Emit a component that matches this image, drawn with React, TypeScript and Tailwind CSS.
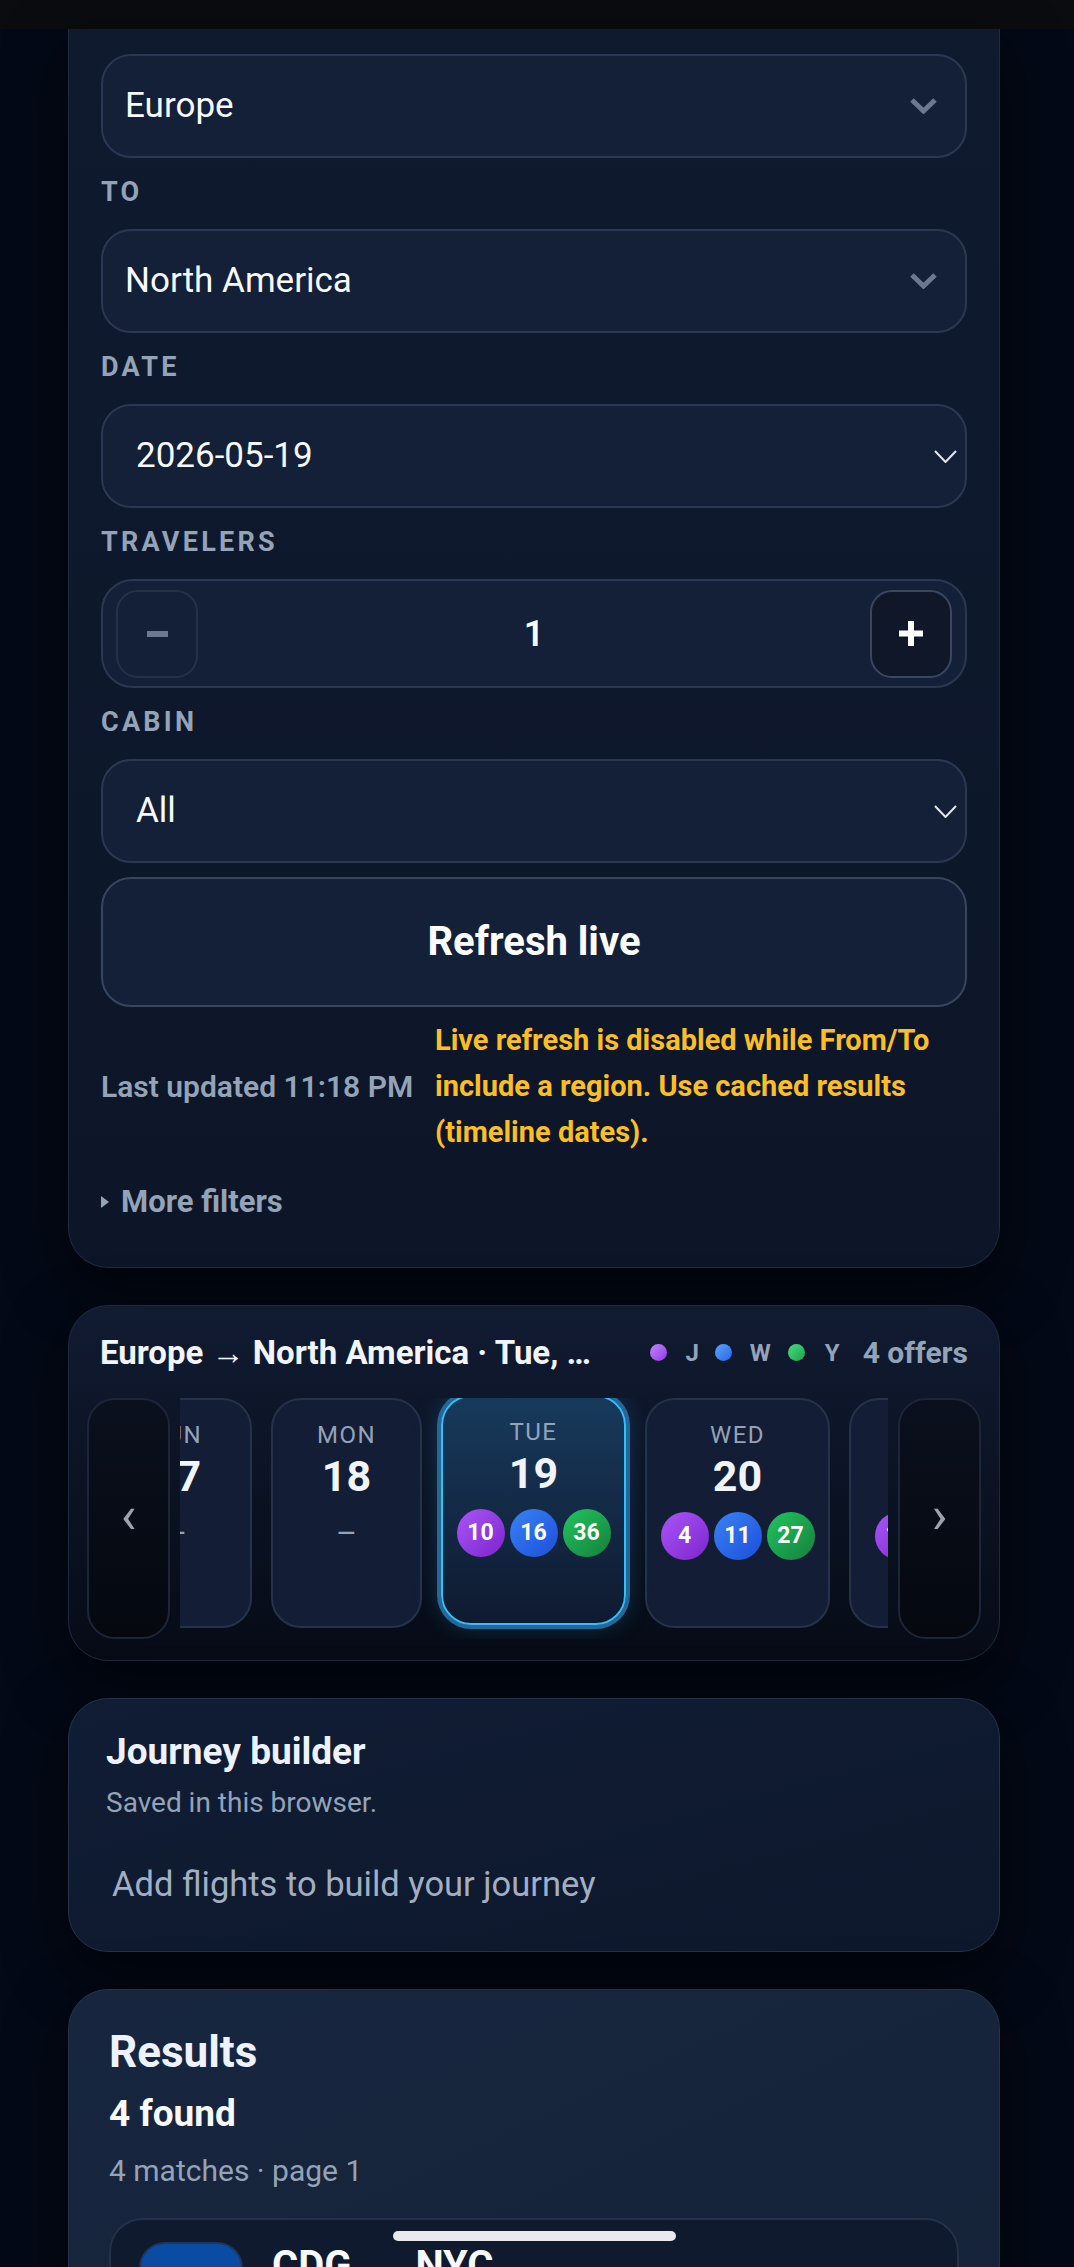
import React from 'react';

type Day = { dow: string; day: string; counts?: [number, number, number]; selected?: boolean; wide?: boolean };

const days: Day[] = [
  { dow: 'SUN', day: '17' },
  { dow: 'MON', day: '18' },
  { dow: 'TUE', day: '19', counts: [10, 16, 36], selected: true },
  { dow: 'WED', day: '20', counts: [4, 11, 27] },
  { dow: 'THU', day: '21', counts: [12, 18, 33], wide: true },
];

const badgeColors = [
  'bg-linear-to-br from-[#a855f7] to-[#7e22ce]',
  'bg-linear-to-br from-[#3b82f6] to-[#1d4ed8]',
  'bg-linear-to-br from-[#22c55e] to-[#15803d]',
];

function BoldChevron() {
  return (
    <svg width="27" height="16" viewBox="0 0 27 16">
      <path d="M2 2 L13.5 13 L25 2" fill="none" stroke="#6b7891" strokeWidth="5" />
    </svg>
  );
}

function ThinChevron() {
  return (
    <svg width="23" height="13" viewBox="0 0 23 13">
      <path d="M1 1 L11.5 12 L22 1" fill="none" stroke="#e5e7eb" strokeWidth="2" />
    </svg>
  );
}

function Label({ children }: { children: React.ReactNode }) {
  return (
    <div className="mt-[21px] mb-[24px] text-[27px] leading-[26px] font-bold tracking-[0.12em] text-[#94a3b8]">
      {children}
    </div>
  );
}

function SelectBox({ value, native }: { value: string; native?: boolean }) {
  return (
    <div
      className={`h-[104px] rounded-[30px] border-2 border-[#2b3852] bg-[#141f38] flex items-center justify-between text-[35px] text-[#f8fafc] ${
        native ? 'pl-[33px] pr-[8px]' : 'pl-[22px] pr-[28px]'
      }`}
    >
      <span>{value}</span>
      {native ? <ThinChevron /> : <BoldChevron />}
    </div>
  );
}

function DayCell({ d }: { d: Day }) {
  const width = d.wide ? 'w-[205px]' : d.counts ? 'w-[185px]' : 'w-[151px]';
  const look = d.selected
    ? 'border-[#38bdf8] bg-linear-to-b from-[#173a5c] to-[#0f1a31] -translate-y-[3px] shadow-[0_0_0_4px_#22699a,0_0_26px_rgba(56,189,248,0.25)]'
    : 'border-[#25324a] bg-[#131e36]';
  return (
    <div className={`shrink-0 h-[230px] ${width} rounded-[30px] border-2 ${look} flex flex-col items-center pt-[23px]`}>
      <div className="text-[24px] leading-[24px] tracking-[0.06em] text-[#94a3b8]">{d.dow}</div>
      <div className="mt-[8px] text-[43px] leading-[42px] font-bold text-[#f1f5f9]">{d.day}</div>
      {d.counts ? (
        <div className="mt-[15px] flex gap-[5px]">
          {d.counts.map((c, i) => (
            <div
              key={i}
              className={`w-[48px] h-[48px] rounded-full ${badgeColors[i]} flex items-center justify-center text-[23px] font-bold text-white`}
            >
              {c}
            </div>
          ))}
        </div>
      ) : (
        <div className="mt-[12px] h-[48px] text-[32px] leading-[48px] text-[#94a3b8]">–</div>
      )}
    </div>
  );
}

function ArrowButton({ glyph, side }: { glyph: string; side: 'left' | 'right' }) {
  return (
    <div
      className={`absolute top-0 ${side === 'left' ? 'left-0' : 'right-0'} w-[83px] h-[241px] rounded-[28px] border-2 border-[#1c2638] bg-linear-to-b from-[#0a101d] to-[#05080f] flex items-center justify-center pb-[6px] text-[52px] leading-[52px] text-[#9ca3af]`}
    >
      {glyph}
    </div>
  );
}

export default function App() {
  return (
    <div className="relative h-[2267px] overflow-hidden bg-[#030916] [font-family:Roboto,'Noto_Sans',sans-serif]">
      <div className="h-[29px] bg-[#0b0c0f]" />

      <div className="ml-[68px] mr-[74px]">
        {/* search card, top part scrolled out of view */}
        <div className="rounded-b-[40px] border border-t-0 border-[#1f2b40] bg-linear-to-b from-[#0f1a2f] to-[#0d1628] px-[32px] pt-[25px] pb-[50px] shadow-[0_20px_60px_rgba(0,0,0,0.6)]">
          <SelectBox value="Europe" />
          <Label>TO</Label>
          <SelectBox value="North America" />
          <Label>DATE</Label>
          <SelectBox value="2026-05-19" native />
          <Label>TRAVELERS</Label>
          <div className="h-[109px] rounded-[32px] border-2 border-[#2b3852] bg-[#141f38] flex items-center justify-between px-[13px]">
            <div className="w-[82px] h-[88px] rounded-[22px] border-2 border-[#253049] flex items-center justify-center">
              <div className="w-[21px] h-[6px] bg-[#6b7891]" />
            </div>
            <div className="text-[36px] font-semibold text-[#f8fafc]">1</div>
            <div className="w-[82px] h-[88px] rounded-[22px] border-2 border-[#3b4760] bg-[#0f1729] flex items-center justify-center">
              <svg width="24" height="25" viewBox="0 0 24 25">
                <rect x="9" y="0" width="6" height="25" fill="#fff" />
                <rect x="0" y="9.5" width="24" height="6" fill="#fff" />
              </svg>
            </div>
          </div>
          <Label>CABIN</Label>
          <SelectBox value="All" native />

          <button className="mt-[14px] w-full h-[130px] rounded-[30px] border-2 border-[#38455e] bg-[#141f38] text-[40px] font-bold text-white">
            Refresh live
          </button>

          <div className="mt-[10px] flex items-center justify-between">
            <span className="text-[30px] font-semibold text-[#94a3b8]">Last updated 11:18 PM</span>
            <p className="w-[532px] text-[29px] leading-[46px] font-bold text-[#fbbf24]">
              Live refresh is disabled while From/To include a region. Use cached results (timeline dates).
            </p>
          </div>

          <div className="mt-[31px] flex items-center gap-[12px] text-[31px] leading-[31px] font-bold text-[#94a3b8]">
            <svg width="8" height="12" viewBox="0 0 8 12">
              <path d="M0 0 L8 6 L0 12 Z" fill="#94a3b8" />
            </svg>
            <span>More filters</span>
          </div>
        </div>

        {/* date timeline */}
        <div className="mt-[37px] rounded-[40px] border border-[#1e2a40] bg-linear-to-b from-[#111b32] to-[#060b16] px-[18px] pt-[24px] pb-[21px] shadow-[0_20px_60px_rgba(0,0,0,0.6)]">
          <div className="flex items-center gap-[45px] px-[13px]">
            <div className="flex-1 min-w-0 truncate text-[33px] leading-[40px] font-bold text-[#f1f5f9]">
              Europe → North America · Tue, May 19
            </div>
            <div className="shrink-0 flex items-center text-[24px] font-bold text-[#94a3b8]">
              <span className="w-[17px] h-[17px] rounded-full bg-linear-to-br from-[#c084fc] to-[#9333ea]" />
              <span className="ml-[18px]">J</span>
              <span className="ml-[16px] w-[17px] h-[17px] rounded-full bg-linear-to-br from-[#60a5fa] to-[#2563eb]" />
              <span className="ml-[18px]">W</span>
              <span className="ml-[17px] w-[17px] h-[17px] rounded-full bg-linear-to-br from-[#4ade80] to-[#16a34a]" />
              <span className="ml-[20px]">Y</span>
              <span className="ml-[23px] text-[30px]">4 offers</span>
            </div>
          </div>

          <div className="relative mt-[23px] h-[241px]">
            <div className="mx-[93px] h-[241px] overflow-hidden">
              <div className="flex gap-[19px] -ml-[79px]">
                {days.map((d) => (
                  <DayCell key={d.day} d={d} />
                ))}
              </div>
            </div>
            <ArrowButton glyph="‹" side="left" />
            <ArrowButton glyph="›" side="right" />
          </div>
        </div>

        {/* journey builder */}
        <div className="mt-[37px] rounded-[40px] border border-[#25324a] bg-linear-to-br from-[#111d35] to-[#0d182c] px-[37px] pt-[31px] pb-[43px] shadow-[0_20px_60px_rgba(0,0,0,0.6)]">
          <div className="text-[37px] leading-[44px] font-bold text-[#eef2ff]">Journey builder</div>
          <div className="mt-[13px] text-[28px] leading-[32px] text-[#94a3b8]">Saved in this browser.</div>
          <div className="mt-[41px] pl-[6px] text-[34.5px] leading-[48px] text-[#a3aec2]">
            Add flights to build your journey
          </div>
        </div>

        {/* results */}
        <div className="mt-[37px] rounded-t-[40px] border border-[#25324a] bg-linear-to-br from-[#17263f] to-[#152238] px-[40px] pt-[36px] pb-[40px] shadow-[0_20px_60px_rgba(0,0,0,0.6)]">
          <div className="text-[44px] leading-[52px] font-bold text-[#eef2ff]">Results</div>
          <div className="mt-[14px] text-[37px] leading-[44px] font-bold text-[#f8fafc]">4 found</div>
          <div className="mt-[17px] text-[30px] leading-[36px] text-[#94a3b8]">4 matches · page 1</div>

          <div className="mt-[29px] rounded-[34px] border-2 border-[#243149] bg-[#0f1a2e] pl-[28px] pt-[22px] pb-[30px]">
            <div className="flex items-start">
              <div className="w-[104px] h-[104px] rounded-[26px] border-2 border-[#1d3560] bg-[#0a4ca3]" />
              <div className="ml-[29px] flex items-center gap-[18px] text-[40px] leading-[48px] font-bold text-[#f8fafc]">
                <span>CDG</span>
                <span className="text-[28px] text-[#94a3b8]">→</span>
                <span>NYC</span>
              </div>
            </div>
          </div>
        </div>
      </div>

      {/* gesture bar overlay */}
      <div className="absolute left-[393px] top-[2231px] w-[283px] h-[10px] rounded-full bg-[#e8eaed]" />
    </div>
  );
}
